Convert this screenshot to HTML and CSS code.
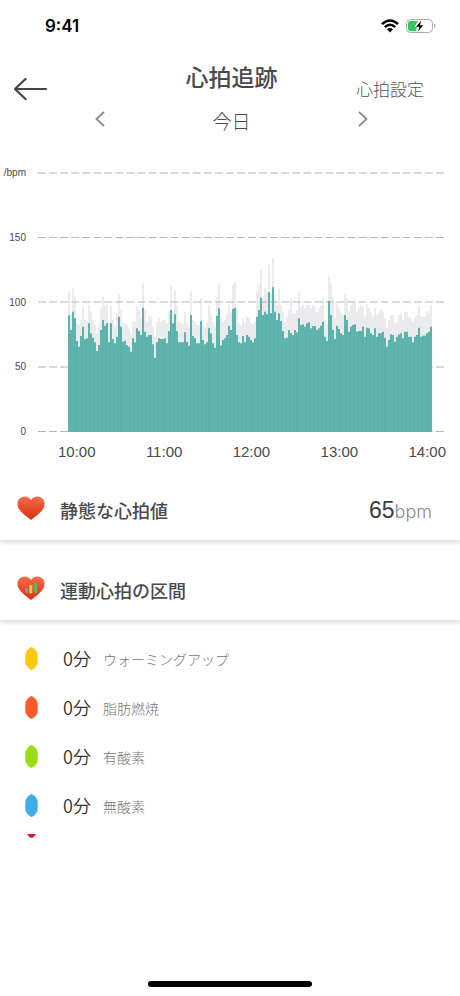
FILE: index.html
```html
<!DOCTYPE html>
<html lang="ja">
<head>
<meta charset="utf-8">
<meta name="viewport" content="width=device-width, initial-scale=1">
<title>心拍追跡</title>
<link rel="stylesheet" href="styles.css">
</head>
<body>
<div class="screen">
  <div class="status">
    <span class="clock">9:41</span>
    <span class="status-icons">
      <svg width="18" height="14" viewBox="0 0 18 14" aria-hidden="true">
        <g fill="none" stroke="#000" stroke-width="2.5">
          <path d="M1 5.2Q9-2.2 17 5.2"/>
          <path d="M3.8 8.2Q9 3.4 14.2 8.2"/>
        </g>
        <path d="M6 10.3Q9 7.8 12 10.3L9 13.4Z"/>
      </svg>
      <svg width="30" height="14" viewBox="0 0 30 14" aria-hidden="true">
        <rect x=".5" y=".5" width="26" height="13" rx="4" fill="#fff" stroke="#aaa"/>
        <path d="M28 4.8q1.6.6 1.6 2.2T28 9.2z" fill="#aaa"/>
        <path d="M4.500 2H12L8.500 8h2.500L10 12h-5.500A2.500 2.500 0 0 1 2 9.500v-5A2.500 2.500 0 0 1 4.500 2z" fill="#34c65b"/>
        <path d="M15.300 1.500L10 7.800h3.300L12 12.500l5.200-6.200h-3.300z"/>
      </svg>
    </span>
  </div>

  <header class="header">
    <button class="back" type="button" aria-label="戻る">
      <svg width="34" height="24" viewBox="0 0 34 24" fill="none" stroke="#444" stroke-width="2.200" stroke-linecap="round" stroke-linejoin="round"><path d="M32 12H1M11.500 2L1 12L11.500 22"/></svg>
    </button>
    <div class="heading">
      <h1>心拍追跡</h1>
      <nav class="days">
        <button type="button" aria-label="前の日"><svg width="10" height="16" viewBox="0 0 10 16" fill="none" stroke="#8c8c8c" stroke-width="1.800"><path d="M9 1L1.500 8L9 15"/></svg></button>
        <span>今日</span>
        <button type="button" aria-label="次の日"><svg width="10" height="16" viewBox="0 0 10 16" fill="none" stroke="#8c8c8c" stroke-width="1.800"><path d="M1 1L8.500 8L1 15"/></svg></button>
      </nav>
    </div>
    <a class="settings" href="#settings">心拍設定</a>
  </header>

  <section class="chart" aria-label="心拍数グラフ">
    <div class="y-axis"><span>/bpm</span><span>150</span><span>100</span><span>50</span><span>0</span></div>
    <svg class="plot" viewBox="0 0 406 260" preserveAspectRatio="none">
      <path id="range" fill="#ebebed"/>
      <path class="grid" d="M0 1H406M0 65.500H406M0 130H406M0 195H406M0 259.500H406"/>
      <path id="rate" fill="#5fb5ad"/>
      <path id="stripes" class="stripes"/>
    </svg>
    <div class="x-axis"><span>10:00</span><span>11:00</span><span>12:00</span><span>13:00</span><span>14:00</span></div>
  </section>

  <section class="panel">
    <svg class="heart" width="28" height="24" viewBox="0 0 28 24" aria-hidden="true">
      <defs><linearGradient id="red" x2="0" y2="1"><stop stop-color="#f36f4d"/><stop offset=".5" stop-color="#e94b2c"/><stop offset="1" stop-color="#d72f15"/></linearGradient></defs>
      <path fill="url(#red)" d="M14 24C11 21.500 6.500 18.500 3.500 15C1.500 12.500.5 10.500.5 7.800C.5 3.500 3.800.5 7.700.5C10.400.5 12.700 1.900 14 4C15.300 1.900 17.600.5 20.300.5C24.200.5 27.500 3.500 27.500 7.800C27.500 10.500 26.500 12.500 24.500 15C21.500 18.500 17 21.500 14 24Z"/>
    </svg>
    <h2>静態な心拍値</h2>
    <p class="value">65<small>bpm</small></p>
  </section>

  <section class="panel">
    <svg class="heart" width="28" height="24" viewBox="0 0 28 24" aria-hidden="true">
      <path fill="url(#red)" d="M14 24C11 21.500 6.500 18.500 3.500 15C1.500 12.500.5 10.500.5 7.800C.5 3.500 3.800.5 7.700.5C10.400.5 12.700 1.900 14 4C15.300 1.900 17.600.5 20.300.5C24.200.5 27.500 3.500 27.500 7.800C27.500 10.500 26.500 12.500 24.500 15C21.500 18.500 17 21.500 14 24Z"/>
      <rect x="8.500" y="12" width="2.500" height="5" rx="1" fill="#8a9dab"/>
      <rect x="12.300" y="9" width="3" height="8.500" rx="1" fill="#f5ca48"/>
      <rect x="16.800" y="6.500" width="3.500" height="10.500" rx="1" fill="#67ad69"/>
    </svg>
    <h2>運動心拍の区間</h2>
  </section>

  <svg class="symbols" width="0" height="0" aria-hidden="true">
    <symbol id="dot" viewBox="0 0 13 23"><path d="M6.500 0C9 1 11.500 3.500 12.500 6.500Q13 11.500 12.500 16.500C11.500 19.500 9 22 6.500 23C4 22 1.500 19.500.5 16.500Q0 11.500.5 6.500C1.500 3.500 4 1 6.500 0Z"/></symbol>
  </svg>
  <ul class="zones">
    <li><svg class="dot warm"><use href="#dot"/></svg><b>0分</b><span>ウォーミングアップ</span></li>
    <li><svg class="dot fat"><use href="#dot"/></svg><b>0分</b><span>脂肪燃焼</span></li>
    <li><svg class="dot aerobic"><use href="#dot"/></svg><b>0分</b><span>有酸素</span></li>
    <li><svg class="dot anaerobic"><use href="#dot"/></svg><b>0分</b><span>無酸素</span></li>
  </ul>
  <svg class="more" width="9" height="4" viewBox="0 0 9 4" aria-hidden="true"><path d="M0 0H9Q7.500 3 4.500 4Q1.500 3 0 0Z" fill="#d81b2c"/></svg>

  <div class="home"></div>
</div>
<script src="chart.js"></script>
</body>
</html>
```
FILE: styles.css
```css
* { box-sizing: border-box; }
body {
  margin: 0;
  background: #fefefe;
  color: #4a4a4a;
  font-family: "Liberation Sans", "Noto Sans CJK JP", sans-serif;
}
h1, h2, p, ul { margin: 0; padding: 0; }
button { border: 0; padding: 0; background: none; display: flex; }
.screen { min-height: 100vh; display: flex; flex-direction: column; }

.status {
  height: 52px;
  padding: 0 24px 0 45px;
  display: flex;
  align-items: center;
  justify-content: space-between;
}
.clock { font: 600 17px "Inter", sans-serif; color: #000; }
.status-icons { display: flex; align-items: center; gap: 7px; }

.header {
  padding: 8px 36px 0 14px;
  display: grid;
  grid-template-columns: 81px 1fr 56px;
  height: 84px;
}
.back { margin-top: 17px; align-self: start; }
h1 {
  text-align: center;
  font: 500 23px/32px "Noto Sans CJK JP", sans-serif;
}
.days {
  display: flex;
  justify-content: space-between;
  align-items: center;
  margin-top: 10px;
  font: 300 19px/38px "Noto Sans CJK JP", sans-serif;
}
.days button { margin-bottom: 4px; }
.settings {
  justify-self: end;
  margin-top: 16px;
  white-space: nowrap;
  color: #555;
  text-decoration: none;
  font: 300 17px/26px "Noto Sans CJK JP", sans-serif;
}

.chart {
  margin-top: 36px;
  padding: 0 16px 0 0;
  display: grid;
  grid-template-columns: 26px 1fr;
  column-gap: 12px;
}
.y-axis {
  display: flex;
  flex-direction: column;
  justify-content: space-between;
  align-items: flex-end;
  margin: -5px 0 -6px;
  font-size: 10px;
  line-height: 12px;
}
.plot { width: 100%; height: 260px; display: block; }
.grid { stroke: #b5b5b5; stroke-dasharray: 8 3.055; fill: none; }
.stripes { stroke: #4da69e; stroke-opacity: 0.35; }
.x-axis {
  grid-column: 2;
  display: flex;
  justify-content: space-between;
  margin: 11px -2px 0 20px;
  font-size: 15px;
  line-height: 18px;
}

.panel {
  height: 64px;
  margin-bottom: 16px;
  padding: 4px 28px 0 17px;
  display: flex;
  align-items: center;
  background: #fff;
  box-shadow: 0 3px 4px rgba(0, 0, 0, 0.12);
}
.chart + .panel { margin-top: 15px; }
.heart { margin: 0 15px 4px 0; }
h2 { font: 500 18px/26px "Noto Sans CJK JP", sans-serif; }
.value { margin-left: auto; font-size: 23px; line-height: 28px; color: #3c3c3c; }
.value small { font: 300 18px "Inter", sans-serif; color: #888; }

.symbols { position: absolute; }
.zones { list-style: none; padding: 0 25px; margin-top: -2px; }
.zones li { height: 49px; display: flex; align-items: center; }
.dot { width: 13px; height: 23px; margin-right: 25px; }
.warm { fill: #fcc90c; }
.fat { fill: #fb5a29; }
.aerobic { fill: #98dc14; }
.anaerobic { fill: #3faceb; }
.zones b {
  width: 40px;
  padding-bottom: 2px;
  font: 350 18px/26px "Noto Sans CJK JP", sans-serif;
  color: #333;
}
.zones span { font: 300 14px/20px "Noto Sans CJK JP", sans-serif; color: #777; }
.more { margin: 4px 0 0 27px; }

.home {
  width: 164px;
  height: 6px;
  margin: auto auto 9px;
  border-radius: 3px;
  background: #000;
}
```
FILE: chart.js
```js
// One sample every two units; values are heights in thirds of a unit.
const rate = [
  350,306,361,341,273,256,288,316,278,281,326,296,283,269,243,261,306,336,319,326,269,326,279,266,286,346,316,271,274,261,256,241,281,269,311,303,291,373,301,286,291,291,263,223,269,281,279,279,281,266,303,366,326,353,303,269,269,269,299,271,
  259,351,288,281,266,266,333,276,263,269,313,296,266,253,349,371,260,276,281,291,319,306,369,373,291,269,266,288,269,291,286,276,269,281,346,366,403,351,361,353,419,356,434,361,336,356,333,303,281,283,306,296,291,306,299,341,321,323,316,326,
  329,311,318,318,306,311,319,331,286,273,393,351,306,279,319,309,296,291,351,336,301,316,321,323,301,303,303,316,286,313,311,296,291,311,286,296,296,301,283,256,276,293,291,271,286,293,296,281,301,301,286,286,269,286,291,313,286,289,289,296,301,316];
const range = [
  421,351,431,406,326,321,336,376,336,331,381,361,336,321,296,321,371,406,381,381,326,381,336,316,356,413,366,326,326,321,311,296,331,331,376,366,341,443,366,331,349,346,316,286,331,341,331,336,336,326,361,439,361,426,381,331,326,326,361,326,
  316,419,336,331,321,321,401,321,311,326,381,356,331,316,406,443,341,331,336,356,381,361,441,451,371,326,319,341,326,346,341,326,323,331,421,441,486,401,431,421,501,411,521,411,381,431,381,361,331,346,366,401,356,356,366,419,376,381,371,381,
  381,371,381,376,361,371,381,401,336,321,466,446,401,341,386,371,356,351,416,401,361,381,389,389,361,371,381,376,346,383,371,361,346,371,351,361,366,361,341,311,336,351,351,326,331,351,356,336,361,361,346,341,331,346,351,379,346,346,346,361,356,381];

const steps = values => "M30 260" + values.map((v, i) => `V${(260 - v / 3).toFixed(1)}h2`).join("") + "V260Z";
document.getElementById("range").setAttribute("d", steps(range));
document.getElementById("rate").setAttribute("d", steps(rate));
document.getElementById("stripes").setAttribute("d",
  rate.map((v, i) => i % 2 || i % 11 === 4 ? `M${30.5 + i * 2} 260V${(261 - v / 3).toFixed(1)}` : "").join(""));
```
